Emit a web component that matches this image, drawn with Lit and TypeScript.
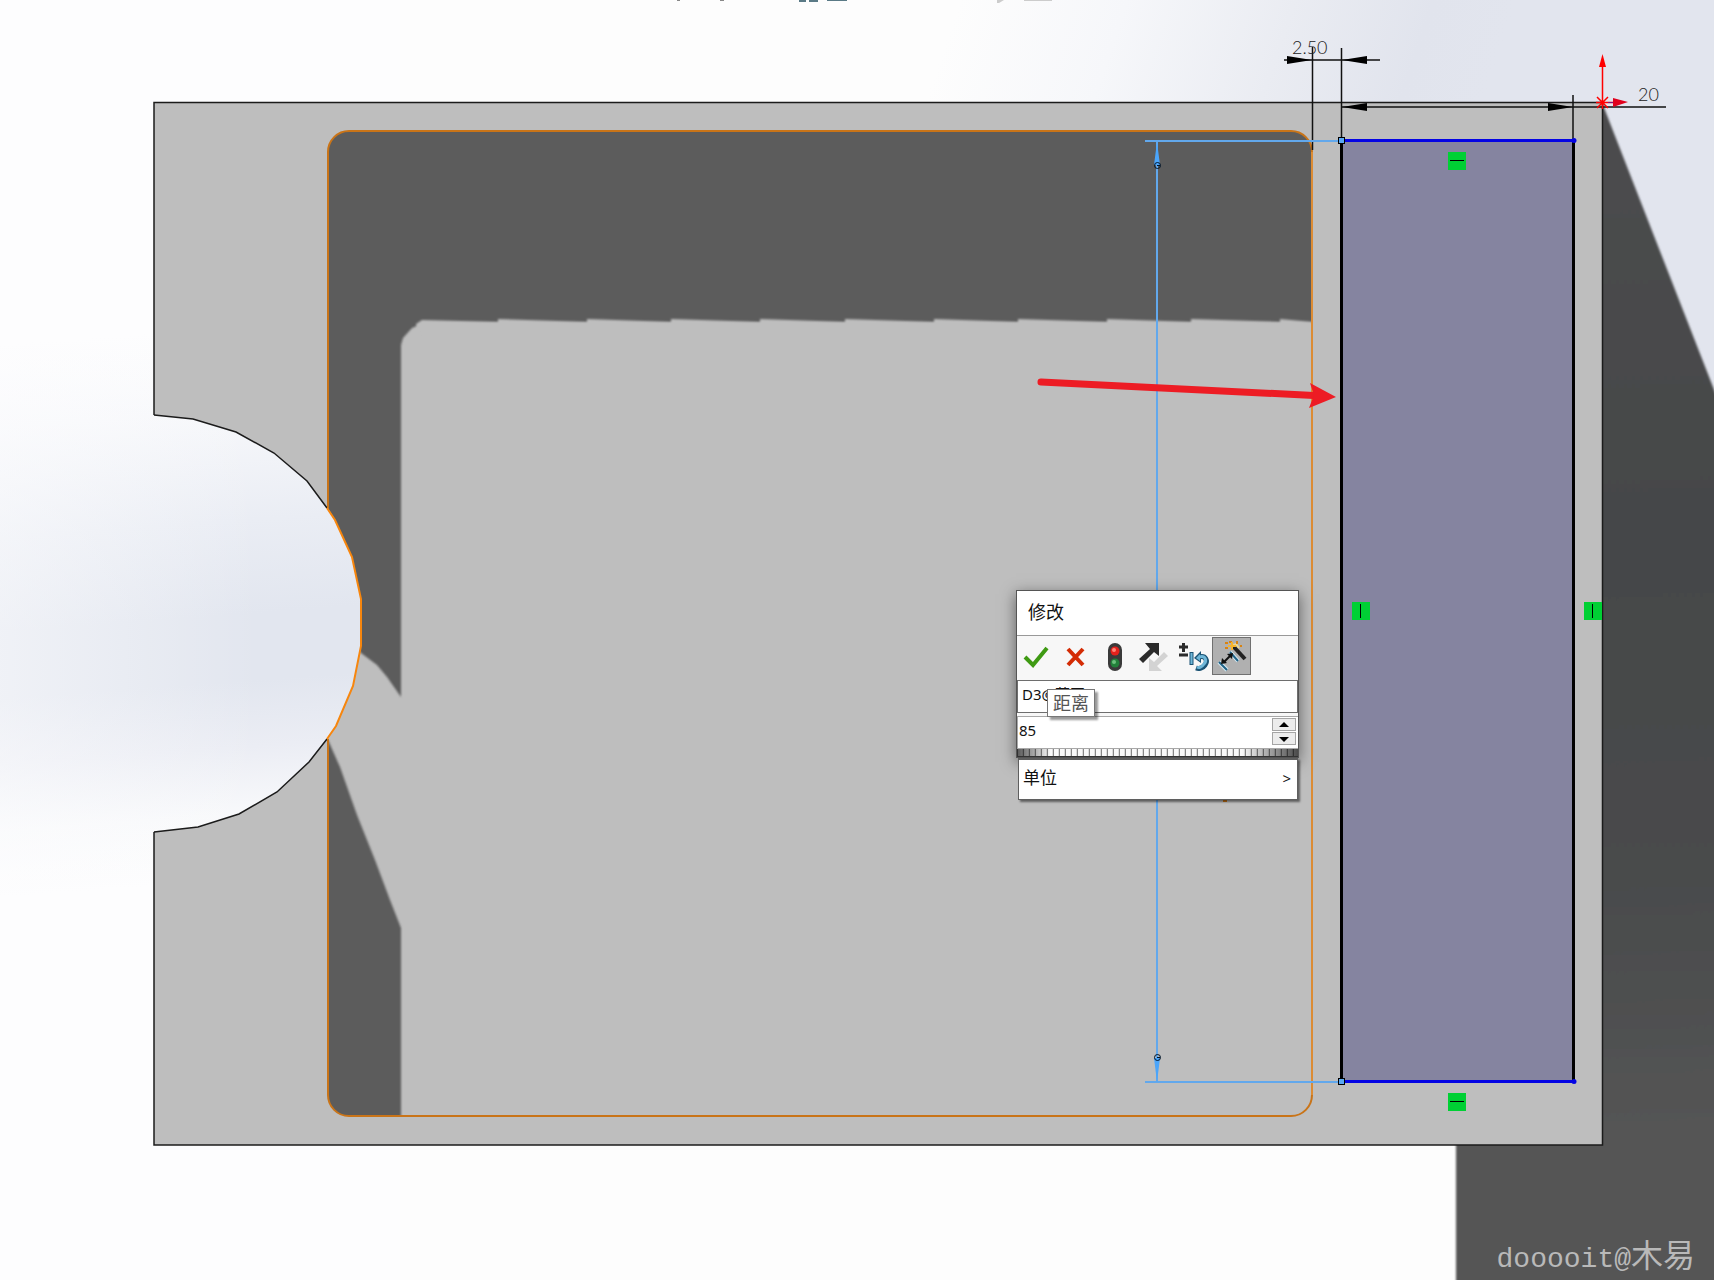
import { LitElement, html, svg, css } from "lit";
import { customElement, property, state } from "lit/decorators.js";

const NOTCH_UPPER = "154,415 193,419 236,432 274,453 307,481 327,508";
const NOTCH_INNER = "327,508 335,520 352,557 361,599 361,646 353,686 336,726 327,739";
const NOTCH_LOWER = "327,739 309,762 277,792 239,814 198,827 154,832";
const SHADOW_STEPS = [420, 498, 587, 671, 760, 845, 934, 1018, 1107, 1191, 1280, 1312];

/** Sawtooth edge of the shadow that the upper wall casts on the pocket floor. */
const shadowEdge = SHADOW_STEPS.slice(1)
  .map((x) => `L${x},322 L${x},319`)
  .join(" ");

interface Relation {
  x: number;
  y: number;
  vertical: boolean;
}

const RELATIONS: Relation[] = [
  { x: 1448, y: 152, vertical: false },
  { x: 1448, y: 1093, vertical: false },
  { x: 1352, y: 602, vertical: true },
  { x: 1584, y: 602, vertical: true },
];

@customElement("model-view")
class ModelView extends LitElement {
  static styles = css`
    :host {
      display: block;
    }
    .scene {
      display: block;
      width: 100%;
      height: auto;
    }
    .dim {
      font-family: Lato, "Liberation Sans", sans-serif;
      font-size: 18px;
      font-weight: 300;
      fill: #222;
    }
  `;

  private relation(r: Relation) {
    return svg`
      <rect x=${r.x} y=${r.y} width="18" height="18" fill="#00d034" />
      ${
        r.vertical
          ? svg`<path d="M${r.x + 8.5} ${r.y + 2}v14" stroke="#000" />`
          : svg`<path d="M${r.x + 2} ${r.y + 8.5}h14" stroke="#000" />`
      }`;
  }

  render() {
    return html`
      <svg class="scene" viewBox="0 0 1714 1280" role="img" aria-label="草图">
        <defs>
          <linearGradient id="band" gradientUnits="userSpaceOnUse" x1="200" y1="330" x2="240" y2="880">
            <stop offset="0" stop-color="#fdfdfe" />
            <stop offset="0.15" stop-color="#f7f8fb" />
            <stop offset="0.35" stop-color="#eaedf4" />
            <stop offset="0.52" stop-color="#e2e6ef" />
            <stop offset="0.64" stop-color="#e2e6ef" />
            <stop offset="0.76" stop-color="#ebedf4" />
            <stop offset="0.88" stop-color="#f8f9fb" />
            <stop offset="1" stop-color="#fdfdfe" />
          </linearGradient>
          <linearGradient id="fade" x1="0" y1="0" x2="1" y2="0">
            <stop offset="0" stop-color="#fdfdfe" stop-opacity="0.5" />
            <stop offset="1" stop-color="#fdfdfe" stop-opacity="0" />
          </linearGradient>
          <linearGradient id="sky" gradientUnits="userSpaceOnUse" x1="960" y1="0" x2="1460" y2="170">
            <stop offset="0" stop-color="#fdfdfd" />
            <stop offset="0.3" stop-color="#f6f7fa" />
            <stop offset="0.6" stop-color="#eaecf2" />
            <stop offset="0.85" stop-color="#e1e4ed" />
            <stop offset="1" stop-color="#e2e5ee" />
          </linearGradient>
          <linearGradient id="cast" gradientUnits="userSpaceOnUse" x1="1610" y1="200" x2="1640" y2="1150">
            <stop offset="0" stop-color="#4b4c4d" />
            <stop offset="0.35" stop-color="#454749" />
            <stop offset="0.7" stop-color="#494b4c" />
            <stop offset="1" stop-color="#555" />
          </linearGradient>
          <filter id="soft" x="-5%" y="-5%" width="110%" height="110%">
            <feGaussianBlur stdDeviation="1.2" />
          </filter>
          <clipPath id="pocket">
            <path
              d="M349,131H1291A21,21 0 0 1 1312,152V1095A21,21 0 0 1 1291,1116H349A21,21 0 0 1 328,1095V739L336,726 353,686 361,646 361,599 352,557 335,520 328,508V152A21,21 0 0 1 349,131Z"
            />
          </clipPath>
        </defs>

        <rect width="1714" height="1280" fill="#fdfdfd" />
        <rect width="400" height="1280" fill="url(#band)" />
        <rect y="330" width="260" height="560" fill="url(#fade)" />
        <rect x="900" width="814" height="500" fill="url(#sky)" />

        <path d="M1601,100 L1720,405 V1290 H1456 V1140 H1601Z" fill="url(#cast)" filter="url(#soft)" />

        <path
          d="M154,103 H1602 V1145 H154 V832 L198,827 239,814 277,792 309,762 336,726 353,686 361,646 361,599 352,557 335,520 307,481 274,453 236,432 193,419 154,415Z"
          fill="#bebebe"
        />

        <g clip-path="url(#pocket)">
          <path
            d="M320,120 H1320 V323 H424 L412,328 403,338 401,345 V697 L387,677 377,665 361,653 350,640 320,620Z"
            fill="#5c5c5c"
            filter="url(#soft)"
          />
          <path d="M416,324 L422,320 ${shadowEdge} V340 H420Z" fill="#bebebe" filter="url(#soft)" />
          <path d="M328,740 L340,767 357,815 375,860 390,900 401,928 V1120 H320 V740Z" fill="#5c5c5c" filter="url(#soft)" />
        </g>

        <g fill="none" stroke="#1b1b1b" stroke-width="1.5">
          <path d="M154,415 V102.5 H1602.5 V1145 H154 V832" />
          <polyline points=${NOTCH_UPPER} />
          <polyline points=${NOTCH_LOWER} />
        </g>
        <g fill="none" stroke="#c97418" stroke-width="2">
          <path d="M328,508 V152 A21,21 0 0 1 349,131 H1291 A21,21 0 0 1 1312,152" />
          <path d="M328,739 V1095 A21,21 0 0 0 349,1116 H1291 A21,21 0 0 0 1312,1095" />
        </g>
        <path d="M1312,152V1095" stroke="#dc8c34" stroke-width="2" />
        <polyline points=${NOTCH_INNER} fill="none" stroke="#f7860e" stroke-width="2" />
        <path d="M1223,800h4v2h-4z" fill="#c97418" />

        <rect x="1342" y="141" width="231" height="941" fill="#8584a0" />
        <path d="M1341.5,140V1081M1573.5,140V1081" stroke="#000" stroke-width="3" />

        <path
          d="M1312.5,47V150M1341.5,48V140M1573,95V140M1284,60H1380M1342,107H1666"
          stroke="#111"
          stroke-width="1.5"
          fill="none"
        />
        <path d="M1312,60L1287,56V64ZM1342,60L1367,56V64ZM1342,107L1367,103V111ZM1573,107L1548,103V111Z" fill="#000" />
        <text class="dim" x="1292" y="54">2.50</text>
        <text class="dim" x="1638" y="101">20</text>

        <path d="M1157,141V1082M1145,141H1338M1145,1082H1338" stroke="#62a8ec" stroke-width="2" />
        <path d="M1157,142L1160,165H1154ZM1157,1082L1160,1058H1154Z" fill="#4aa5fb" />
        <g fill="none" stroke="#001428">
          <circle cx="1157.5" cy="165.5" r="3" />
          <circle cx="1157.5" cy="1057.5" r="3" />
          <path d="M1157,165.5h3M1157,1057.5h3" />
        </g>

        <path d="M1343,140.5H1573M1343,1081.5H1573" stroke="#0404e4" stroke-width="3" />
        <circle cx="1574" cy="140.5" r="2.5" fill="#0404e4" />
        <circle cx="1574" cy="1081.5" r="2.5" fill="#0404e4" />
        <g fill="#5aa8f4" stroke="#000">
          <rect x="1338.5" y="137.5" width="6" height="6" />
          <rect x="1338.5" y="1078.5" width="6" height="6" />
        </g>

        ${RELATIONS.map((r) => this.relation(r))}

        <path
          d="M1602.5,102V60M1602,102.5H1616M1597,97L1608,108M1608,97L1597,108M1602.5,97V109M1596,102.5H1602"
          stroke="#f00"
          stroke-width="1.5"
        />
        <path d="M1602.500,54L1606,67H1599Z" fill="#f00" />
        <path d="M1608,102.5H1616" stroke="#80107a" />
        <path d="M1613,98L1628,102L1613,107Z" fill="#e0001c" />

        <path d="M1041,382L1314,395.5" stroke="#ed1c24" stroke-width="7" stroke-linecap="round" />
        <path d="M1336,397L1310,383L1314,395L1309,408Z" fill="#ed1c24" />

        <path d="M799,0h7v2h-7zM809,0h9v2h-9zM827,0h20v1h-20z" fill="#5a7a86" />
        <path d="M677,0h3v1h-3zM720,0h4v1h-4z" fill="#888" />
        <path d="M997,0h7l-5,3h-2zM1024,0h28v1h-28z" fill="#ccc" />
      </svg>
    `;
  }
}

const ICONS = {
  ok: svg`<path d="M7 19l8 8L29 10" fill="none" stroke="#3f9a13" stroke-width="4" />`,
  cancel: svg`<path d="M11 11l15 16M26 11L11 27" fill="none" stroke="#d42c05" stroke-width="4" />`,
  rebuild: svg`
    <rect x="12" y="5" width="14" height="28" rx="7" fill="#3a3a3a" />
    <circle cx="19" cy="13" r="4.5" fill="#e3211c" />
    <circle cx="18" cy="12" r="2" fill="#ff8578" />
    <circle cx="19" cy="25" r="4.5" fill="#22803a" />
    <circle cx="18" cy="24" r="2" fill="#6cc07c" />`,
  reverse: svg`
    <path d="M4 21L15 11l-5-6h14v13l-5-4L8 25z" fill="#2b2b2b" />
    <path d="M29 14l4 4-11 10 5 5H14V20l5 4z" fill="#d3d3d3" />`,
  increment: svg`
    <path d="M5 9h9M9.5 5v9M5 17h9" stroke="#2b2b2b" stroke-width="3" />
    <path d="M17.500 14v13" stroke="#1b5374" stroke-width="4" />
    <path d="M17.500 15v11" stroke="#6fb7d8" stroke-width="2" />
    <path d="M25 19c7-2 9 4 6 8-2 3-6 4-9 3" fill="none" stroke="#1b5374" stroke-width="5" />
    <path d="M20 20l7-7v12z" fill="#1b5374" />
    <path d="M25 19c7-2 8 4 5 7-2 3-5 4-7 3" fill="none" stroke="#6fb7d8" stroke-width="3" />
    <path d="M22 20l4-4v7z" fill="#6fb7d8" />`,
  mark: svg`
    <path d="M17 14l8 9M6 24l8 8" stroke="#d8edf6" stroke-width="4" />
    <path d="M17 14l8 9M6 24l8 8" stroke="#1f6286" stroke-width="2" />
    <path d="M11 24L18 17" stroke="#111" stroke-width="2" />
    <path d="M8 26l1-6 5 5zM20 15l-6 1 5 5z" fill="#111" />
    <path d="M20 8L32 21" stroke="#222" stroke-width="4" />
    <path d="M19 8l4-2 3 4" stroke="#f2d98a" stroke-width="2" fill="none" />
    <path d="M12 4h3v2h-3zM16 3h3v2h-3zM23 3h2v3h-2zM27 7h2v2h-2zM12 9h3v2h-3z" fill="#d98310" />
    <path d="M19 4v8M15 8h8" stroke="#f6b52c" stroke-width="2" />`,
};

type IconName = keyof typeof ICONS;

const TOOLS: { icon: IconName; label: string }[] = [
  { icon: "ok", label: "确定" },
  { icon: "cancel", label: "取消" },
  { icon: "rebuild", label: "重建模型" },
  { icon: "reverse", label: "反转尺寸方向" },
  { icon: "increment", label: "重设增量值" },
  { icon: "mark", label: "标注尺寸" },
];

@customElement("modify-dialog")
class ModifyDialog extends LitElement {
  @property({ type: String }) name = "D3@草图6";
  @state() private value = 85;
  @state() private pressed = true;

  static styles = css`
    :host {
      display: block;
      font-family: "Noto Sans", "Noto Sans CJK SC", sans-serif;
      color: #111;
    }
    * {
      box-sizing: border-box;
    }
    button,
    input {
      font: inherit;
      color: inherit;
      margin: 0;
      padding: 0;
      border: 0;
      border-radius: 0;
      background: none;
      outline: none;
    }
    .panel {
      position: relative;
      display: flex;
      flex-direction: column;
      border: 1px solid #555;
      background: #f7f7f7;
      box-shadow: 0 4px 14px rgba(0, 0, 0, 0.5);
    }
    .title {
      height: 45px;
      margin: 0;
      padding: 0 11px;
      background: #fff;
      border-bottom: 1px solid #999;
      font-size: 18px;
      font-weight: 400;
      line-height: 42px;
    }
    .tools {
      display: flex;
      height: 44px;
      padding-top: 1px;
    }
    .tool {
      width: 39px;
      height: 38px;
      border: 1px solid transparent;
    }
    .tool[aria-pressed="true"] {
      background: #b0b0b0;
      border-color: #707070;
    }
    .glyph {
      display: block;
      width: 37px;
      height: 36px;
    }
    .field {
      height: 33px;
      padding: 0 4px 6px;
      border: 1px solid #6e6e6e;
      background: #fff;
      font-size: 15px;
    }
    .value {
      display: flex;
      height: 33px;
      margin-top: 3px;
      padding-right: 2px;
      border: 1px solid #a8a8a8;
      border-right-width: 0;
      background: #fff;
    }
    .number {
      flex: 1;
      min-width: 0;
      padding: 0 1px 6px;
      font-size: 15px;
    }
    .spin {
      display: flex;
      flex-direction: column;
      gap: 1px;
      padding-top: 1px;
    }
    .step {
      display: grid;
      place-items: center;
      width: 24px;
      height: 13px;
      background: #ececec;
      border: 1px solid #a5a5a5;
    }
    .arrow {
      display: block;
      width: 10px;
      height: 6px;
    }
    .wheel {
      appearance: none;
      display: block;
      width: 100%;
      height: 8px;
      border-bottom: 1px solid #333;
      background:
        linear-gradient(90deg, rgba(0, 0, 0, 0.65), transparent 12%, transparent 80%, rgba(0, 0, 0, 0.7)),
        repeating-linear-gradient(90deg, #888 0 1px, #fafafa 1px 5px, #ddd 5px 6px);
    }
    .wheel::-webkit-slider-thumb {
      appearance: none;
      width: 8px;
      height: 7px;
    }
    .unit {
      position: relative;
      display: flex;
      justify-content: space-between;
      width: calc(100% - 3px);
      height: 42px;
      margin-left: 2px;
      padding: 0 6px 0 4px;
      border: 1px solid #5f5f5f;
      border-top-width: 2px;
      background: #fff;
      box-shadow: 2px 2px 2px rgba(0, 0, 0, 0.5);
      font-size: 17px;
      line-height: 36px;
    }
    .more {
      font-size: 15px;
    }
    .tip {
      position: absolute;
      left: 30px;
      top: 98px;
      padding: 0 5px;
      border: 1px solid #777;
      background: #fff;
      box-shadow: 3px 3px 2px rgba(0, 0, 0, 0.4);
      color: #555;
      font-size: 18px;
      line-height: 26px;
    }
  `;

  private nudge(delta: number) {
    this.value += delta;
  }

  private onInput(e: Event) {
    const n = Number((e.target as HTMLInputElement).value);
    if (!Number.isNaN(n)) this.value = n;
  }

  render() {
    return html`
      <section class="panel" role="dialog" aria-labelledby="title">
        <h1 class="title" id="title">修改</h1>
        <div class="tools" role="toolbar">
          ${TOOLS.map(
            (t) => html`
              <button
                class="tool"
                aria-label=${t.label}
                aria-pressed=${t.icon === "mark" ? String(this.pressed) : "false"}
                @click=${() => t.icon === "mark" && (this.pressed = !this.pressed)}
              >
                <svg class="glyph" viewBox="0 0 37 36">${ICONS[t.icon]}</svg>
              </button>
            `
          )}
        </div>
        <input class="field" type="text" aria-label="尺寸名称" .value=${this.name} />
        <div class="value">
          <input class="number" type="text" aria-label="尺寸值" .value=${String(this.value)} @change=${this.onInput} />
          <div class="spin">
            <button class="step" aria-label="增加" @click=${() => this.nudge(1)}>
              <svg class="arrow" viewBox="0 0 10 6"><path d="M5 0l5 5H0z" /></svg>
            </button>
            <button class="step" aria-label="减少" @click=${() => this.nudge(-1)}>
              <svg class="arrow" viewBox="0 0 10 6"><path d="M5 6l5-5H0z" /></svg>
            </button>
          </div>
        </div>
        <input class="wheel" type="range" min="0" max="200" aria-label="拨轮" .value=${String(this.value)} @input=${this.onInput} />
        <div class="tip" role="tooltip">距离</div>
      </section>
      <button class="unit"><span>单位</span><span class="more">&gt;</span></button>
    `;
  }
}

@customElement("app-root")
class AppRoot extends LitElement {
  static styles = css`
    :host {
      display: block;
    }
    .stage {
      position: relative;
      overflow: hidden;
      background: #fdfdfd;
    }
    .dialog {
      position: absolute;
      left: 1016px;
      top: 590px;
      width: 283px;
    }
    .mark {
      position: absolute;
      right: 19px;
      bottom: 0;
      display: flex;
      align-items: baseline;
      color: #b9b9b9;
      font-family: "Liberation Mono", monospace;
      font-size: 28px;
      line-height: 40px;
    }
    .han {
      font-family: "Noto Sans CJK SC", sans-serif;
      font-size: 32px;
    }
  `;

  render() {
    return html`
      <main class="stage">
        <model-view></model-view>
        <modify-dialog class="dialog"></modify-dialog>
        <div class="mark"><span>dooooit@</span><span class="han">木易</span></div>
      </main>
    `;
  }
}
